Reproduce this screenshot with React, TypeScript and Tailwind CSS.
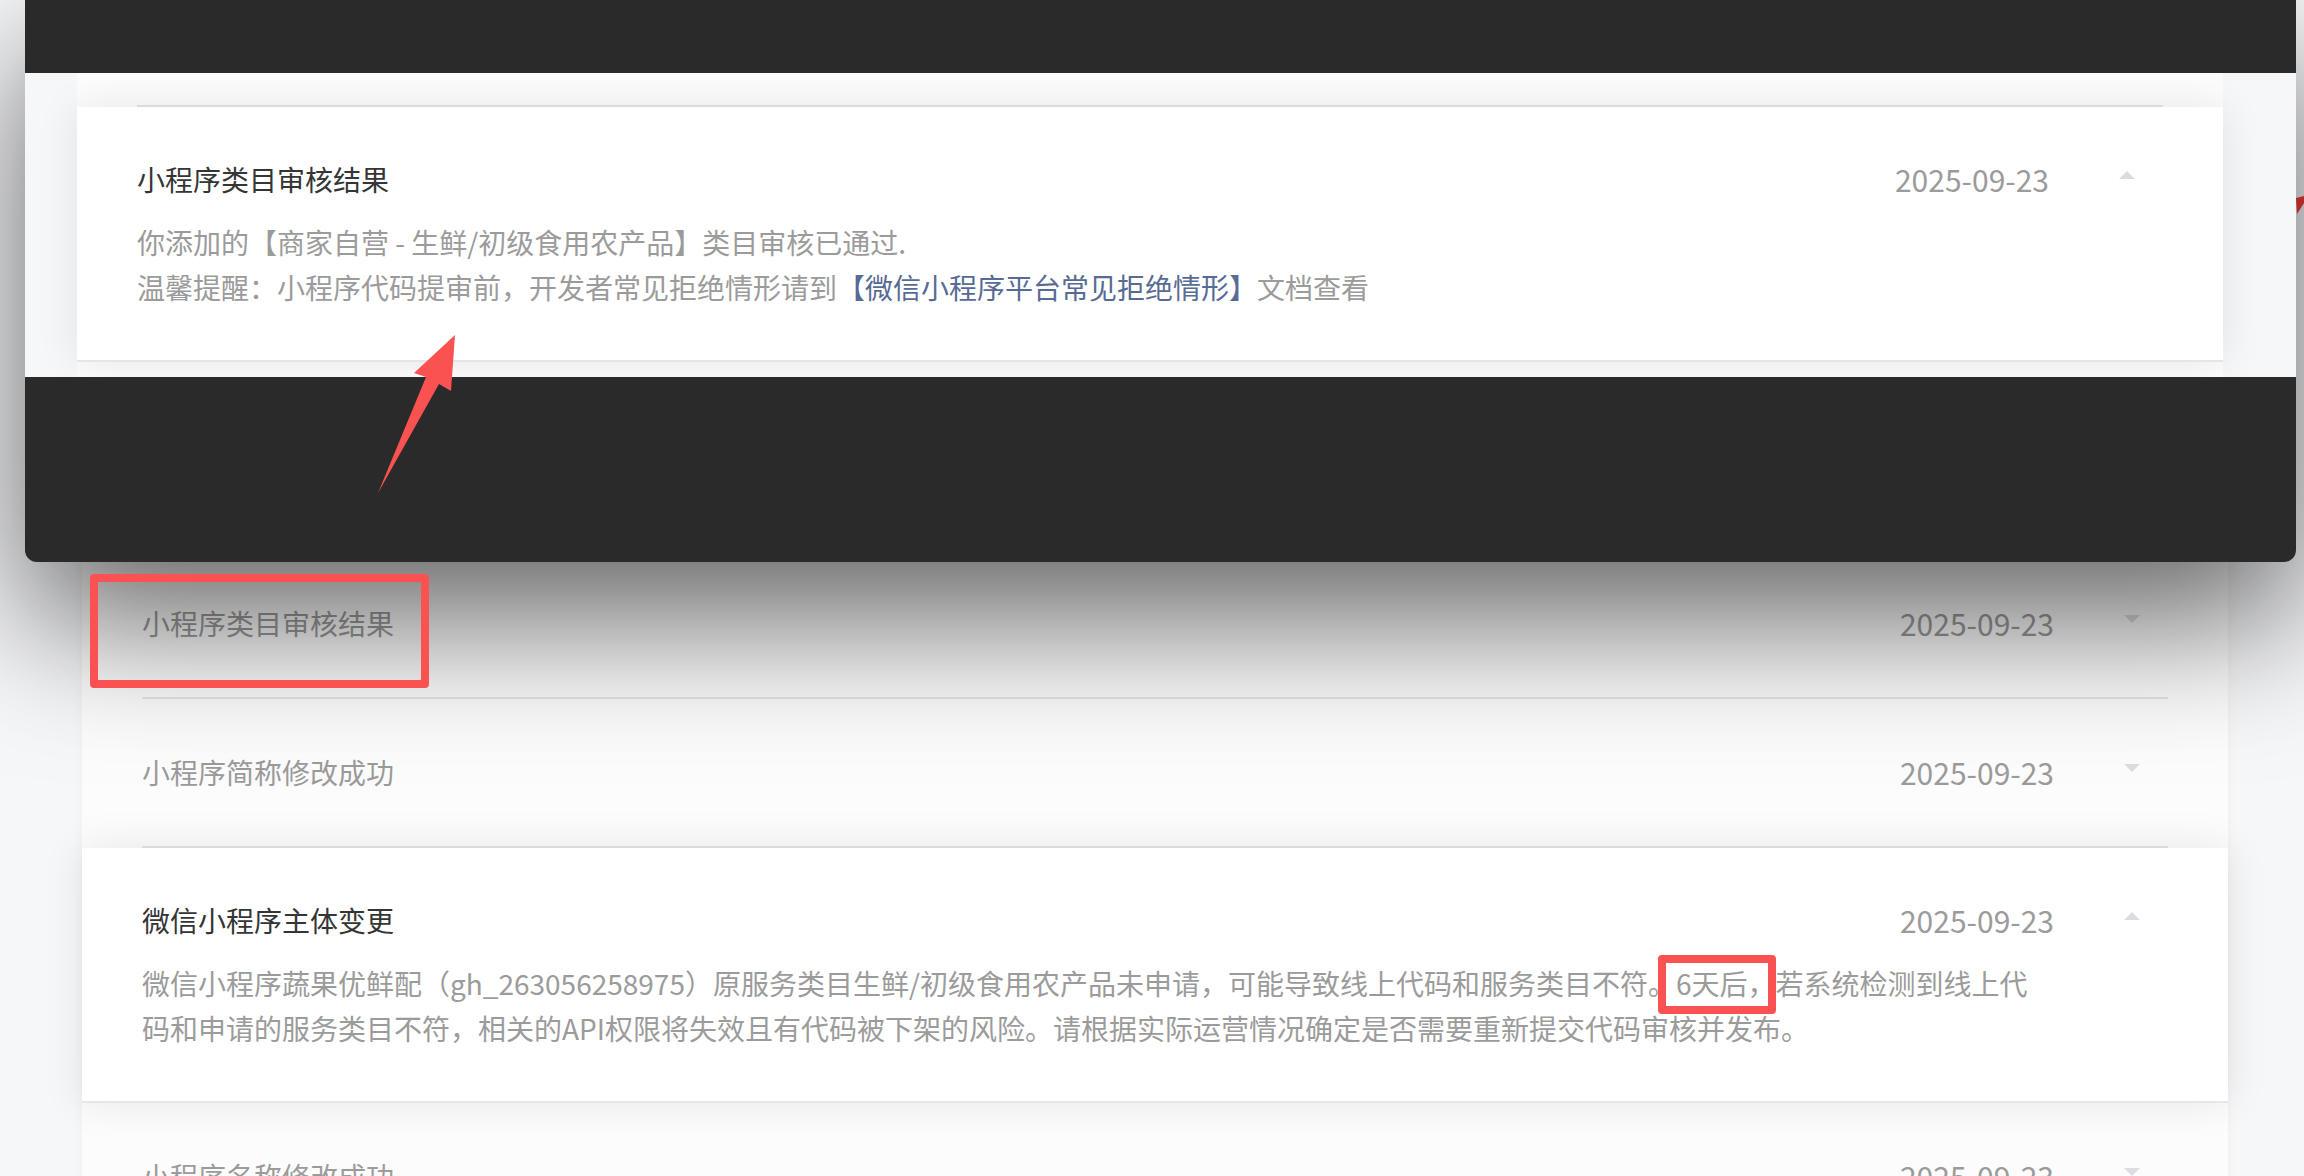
import React from "react";

function Caret({ up }: { up: boolean }) {
  return (
    <svg width="16" height="8" viewBox="0 0 16 8" className="mb-[8px] shrink-0">
      <polygon points={up ? "8,0 16,8 0,8" : "0,0 16,0 8,8"} fill="#dcdde3" />
    </svg>
  );
}

function RowHead({ title, dark, up }: { title: React.ReactNode; dark?: boolean; up?: boolean }) {
  return (
    <div className="flex items-center">
      <div className={`flex-1 text-[28px] leading-[40px] ${dark ? "text-[#353535]" : "text-[#9b9b9b]"}`}>{title}</div>
      <div className="text-[30px] leading-[40px] text-[#9b9b9b]">2025-09-23</div>
      <div className="ml-[70px] flex items-center">
        <Caret up={!!up} />
      </div>
    </div>
  );
}

function CollapsedRow({ title, annotated }: { title: string; annotated?: boolean }) {
  return (
    <div className="relative flex flex-col">
      <div className="pt-[53px] pb-[54px] pl-[60px] pr-[88px]">
        <RowHead title={title} />
      </div>
      <div className="mx-[60px] h-[2px] bg-[#e5e5ea]" />
      {annotated && (
        <div className="absolute left-[8px] top-[24px] z-30 w-[339px] h-[114px] rounded-[4px] border-[8px] border-[#fa5151]" />
      )}
    </div>
  );
}

function ExpandedRow({ title, children }: { title: string; children: React.ReactNode }) {
  return (
    <div className="relative z-10 shrink-0 bg-white shadow-[0_0_40px_rgba(0,0,0,0.09)] border-b-2 border-[#e6e6ea] pt-[52px] pb-[50px] pl-[60px] pr-[88px]">
      <RowHead title={title} dark up />
      <div className="mt-[21px] text-[28px] leading-[45px] text-[#9b9b9b]">{children}</div>
    </div>
  );
}

export default function App() {
  return (
    <div className="relative w-[2304px] h-[1176px] overflow-hidden bg-[#f6f7f9] font-['Noto_Sans_CJK_SC',sans-serif]">
      {/* page list */}
      <div className="ml-[82px] w-[2146px] pt-[550px] flex flex-col bg-[#fcfcfc] shadow-[0_0_10px_rgba(0,0,0,0.04)]">
        <CollapsedRow title="小程序类目审核结果" annotated />
        <CollapsedRow title="小程序简称修改成功" />
        <ExpandedRow title="微信小程序主体变更">
          微信小程序蔬果优鲜配（gh_263056258975）原服务类目生鲜/初级食用农产品未申请，可能导致线上代码和服务类目不符。
          <span className="relative">
            6天后，
            <span className="absolute -left-[18px] -right-[1px] -top-[8px] h-[59px] rounded-[4px] border-[8px] border-[#fa5151]" />
          </span>
          若系统检测到线上代
          <br />
          码和申请的服务类目不符，相关的API权限将失效且有代码被下架的风险。请根据实际运营情况确定是否需要重新提交代码审核并发布。
        </ExpandedRow>
        <CollapsedRow title="小程序名称修改成功" />
        <CollapsedRow title="小程序名称修改成功" />
      </div>

      {/* floating zoomed overlay */}
      <div className="absolute left-[25px] top-0 z-20 w-[2271px] h-[562px] rounded-b-[12px] bg-[#2a2a2a] shadow-[0_58px_138px_rgba(0,0,0,0.6)] flex flex-col overflow-hidden">
        <div className="h-[73px] shrink-0" />
        <div className="h-[304px] shrink-0 flex bg-[#f6f7f9] overflow-hidden">
          <div className="w-[52px] shrink-0" />
          <div className="w-[2146px] shrink-0 flex flex-col bg-[#fcfcfc]">
            <div className="h-[32px] shrink-0" />
            <div className="mx-[60px] h-[2px] shrink-0 bg-[#e5e5ea]" />
            <ExpandedRow title="小程序类目审核结果">
              <div>你添加的【商家自营 - 生鲜/初级食用农产品】类目审核已通过.</div>
              <div>
                温馨提醒：小程序代码提审前，开发者常见拒绝情形请到
                <span className="text-[#576b95]">【微信小程序平台常见拒绝情形】</span>
                文档查看
              </div>
            </ExpandedRow>
          </div>
        </div>
      </div>

      {/* annotations */}
      <svg className="pointer-events-none absolute left-0 top-0 z-30" width="2304" height="1176" viewBox="0 0 2304 1176">
        <polygon points="378,493 426,377 414,373 455,335 451,391 439,384" fill="#fa5151" />
        <polygon points="2296,198 2304,196 2304,203 2297,214" fill="#b02a2a" />
      </svg>
    </div>
  );
}
